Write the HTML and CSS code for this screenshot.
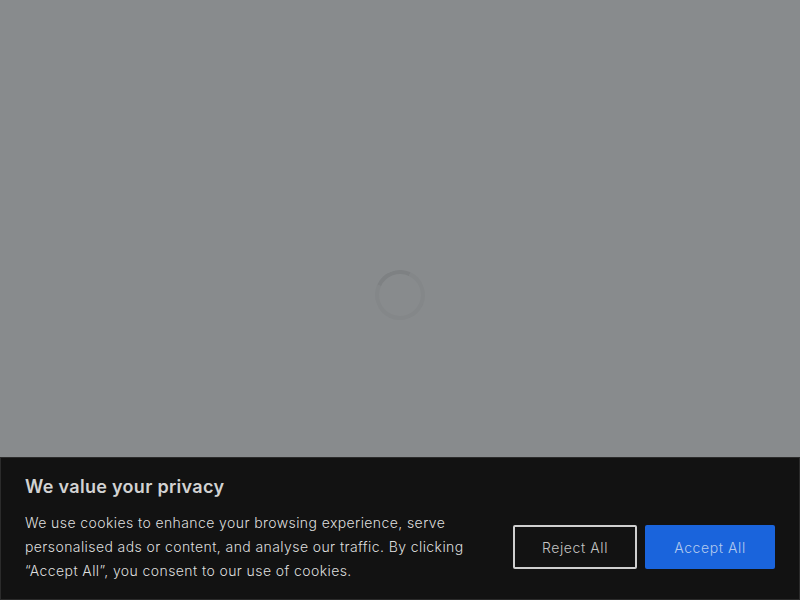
FILE: index.html
```html
<!DOCTYPE html>
<html lang="en">
<head>
<meta charset="utf-8">
<title>We value your privacy</title>
<link rel="stylesheet" href="styles.css">
</head>
<body class="page">
<main class="loader-area">
  <div class="spinner"></div>
</main>
<section class="consent">
  <h2 class="consent-title">We value your privacy</h2>
  <div class="consent-row">
    <p class="consent-text">We use cookies to enhance your browsing experience, serve personalised ads or content, and analyse our traffic. By clicking “Accept All”, you consent to our use of cookies.</p>
    <div class="consent-actions">
      <button class="btn btn-reject">Reject All</button>
      <button class="btn btn-accept">Accept All</button>
    </div>
  </div>
</section>
</body>
</html>
```
FILE: styles.css
```css
html, body { margin: 0; height: 100%; }
.page {
  width: 800px; height: 600px; overflow: hidden;
  display: flex; flex-direction: column;
  background: #888b8d;
  font-family: "Inter", "Liberation Sans", sans-serif;
}
.loader-area { flex: 1; display: flex; align-items: center; justify-content: center; padding-top: 133px; box-sizing: border-box; }
.spinner {
  width: 50px; height: 50px; box-sizing: border-box;
  border-radius: 50%;
  border: 4px solid #848789;
  border-top-color: #7e8183;
  transform: rotate(-20deg);
}
.consent {
  box-sizing: border-box; height: 143px;
  background: #121212;
  border: 1px solid #2b2b2b;
  padding: 17px 24px 0 24px;
}
.consent-title { margin: 0 0 12px; font-size: 18px; line-height: 24px; font-weight: 600; letter-spacing: 0.3px; color: #d2d2d2; }
.consent-row { display: flex; align-items: center; justify-content: space-between; }
.consent-text { margin: 0; width: 450px; font-size: 14px; line-height: 24px; font-weight: 300; letter-spacing: 0.41px; color: #dedede; }
.consent-actions { display: flex; gap: 8px; }
.btn { height: 44px; box-sizing: border-box; font: inherit; font-size: 14px; font-weight: 300; letter-spacing: 0.6px; border-radius: 2px; }
.btn-reject { width: 124px; background: transparent; border: 2px solid #cfcfcf; color: #c4c4c4; }
.btn-accept { width: 130px; background: #1a64dc; border: none; color: #b4caee; }
```
